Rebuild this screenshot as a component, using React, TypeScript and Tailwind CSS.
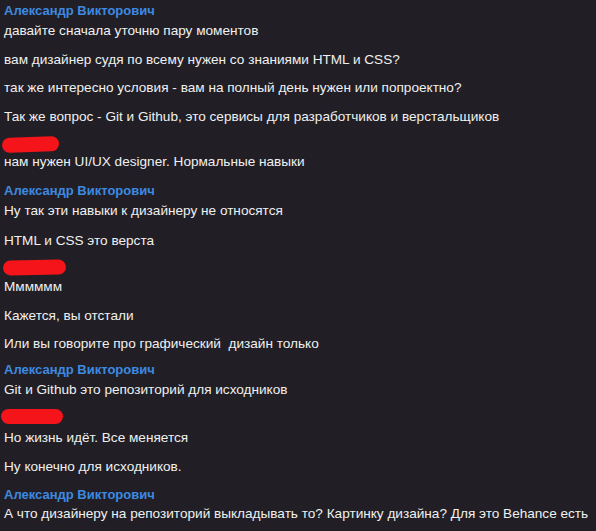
import React from "react";

const Name = ({ className = "" }: { className?: string }) => (
  <div className={"h-5 leading-5 font-bold text-[#3d8ae0] text-[13px] " + className}>Александр Викторович</div>
);

const Msg = ({ children, className = "" }: { children: React.ReactNode; className?: string }) => (
  <div className={"h-5 leading-5 text-[13.6px] text-[#f0f0f0] whitespace-nowrap " + className}>{children}</div>
);

export default function App() {
  return (
    <div
      className="w-[596px] h-[531px] overflow-hidden bg-[#211f25] pl-1 antialiased"
      style={{ fontFamily: '"Liberation Sans", Arial, sans-serif' }}
    >
      <Name className="mt-[1px]" />
      <Msg>давайте сначала уточню пару моментов</Msg>
      <Msg className="mt-[9px]">вам дизайнер судя по всему нужен со знаниями HTML и CSS?</Msg>
      <Msg className="mt-[8px]">так же интересно условия - вам на полный день нужен или попроектно?</Msg>
      <Msg className="mt-[9px]">Так же вопрос - Git и Github, это сервисы для разработчиков и верстальщиков</Msg>
      <div className="mt-[7px] h-5 flex items-center -ml-[2px]">
        <div className="w-[57px] h-[15px] rounded-full bg-[#f5141a] -rotate-2" />
      </div>
      <Msg className="-mt-[2px]">нам нужен UI/UX designer. Нормальные навыки</Msg>
      <Name className="mt-[9px]" />
      <Msg>Ну так эти навыки к дизайнеру не относятся</Msg>
      <Msg className="mt-[10px]">HTML и CSS это верста</Msg>
      <div className="mt-[6px] h-5 flex items-center -ml-[1px]">
        <div className="w-[63px] h-[15px] rounded-full bg-[#f5141a] -rotate-1" />
      </div>
      <Msg>Мммммм</Msg>
      <Msg className="mt-[9px]">Кажется, вы отстали</Msg>
      <Msg className="mt-[8px]">Или вы говорите про графический&nbsp; дизайн только</Msg>
      <Name className="mt-[6px]" />
      <Msg>Git и Github это репозиторий для исходников</Msg>
      <div className="mt-[6px] h-5 flex items-center -ml-[3px]">
        <div className="w-[62px] h-[15px] rounded-full bg-[#f5141a]" />
      </div>
      <Msg className="mt-[2px]">Но жизнь идёт. Все меняется</Msg>
      <Msg className="mt-[9px]">Ну конечно для исходников.</Msg>
      <Name className="mt-[8px]" />
      <Msg className="-mt-[1px]">А что дизайнеру на репозиторий выкладывать то? Картинку дизайна? Для это Behance есть</Msg>
    </div>
  );
}
